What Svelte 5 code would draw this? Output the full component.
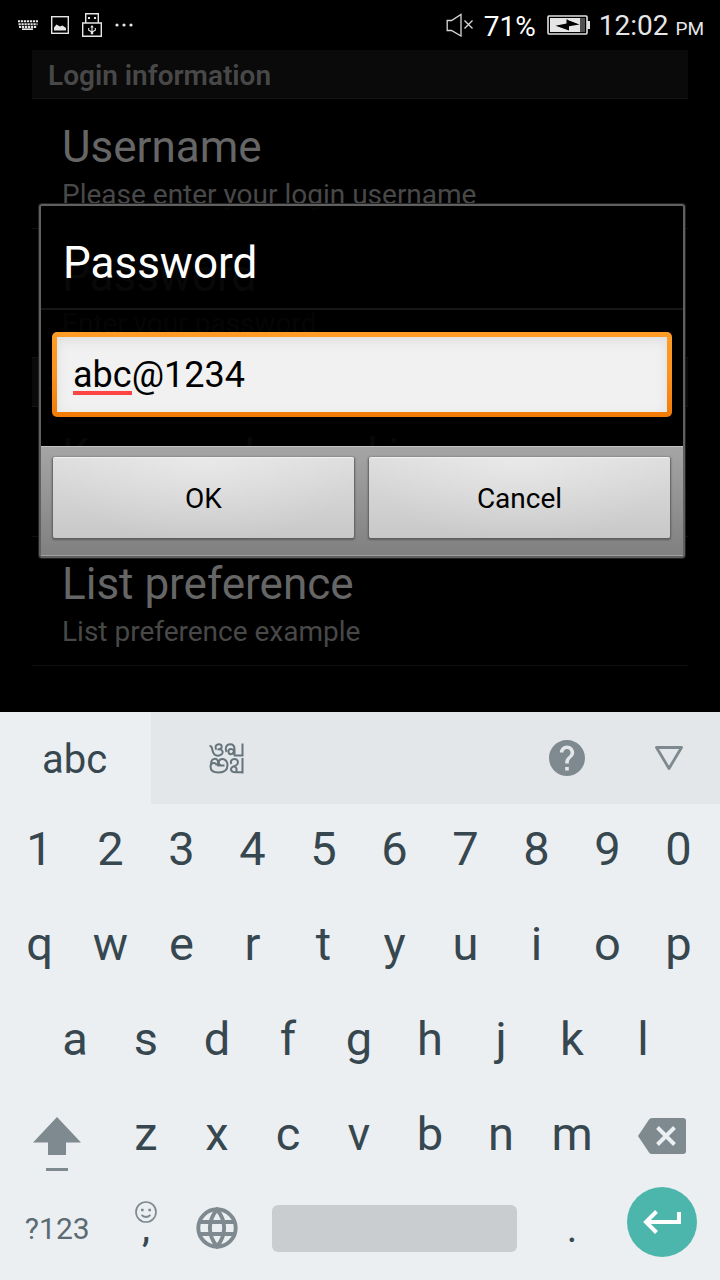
<script>
  const digits = [...'1234567890'];
  const upper = [...'qwertyuiop'];
  const home = [...'asdfghjkl'];
  const lower = [...'zxcvbnm'];
  let password = $state('abc@1234');
</script>

<div class="screen">
  <header class="status">
    <div class="notes">
      <svg width="20" height="10" viewBox="0 0 20 10" aria-hidden="true">
        <path d="M0 1.2H20M0.5 4.2H19.5M1 7H19" stroke="#e6e6e6" stroke-width="2" stroke-dasharray="2.2 .8" />
        <path d="M4 9.2H15" stroke="#e6e6e6" stroke-width="1.6" />
      </svg>
      <svg class="note" width="18" height="18" viewBox="0 0 18 18" aria-hidden="true">
        <rect x=".7" y=".7" width="16.6" height="16.6" fill="none" stroke="#e6e6e6" stroke-width="1.4" />
        <path d="M3 14.500V11.500L5.500 8.500L9 10.500L11.500 9.500L15 12V14.500Z" fill="#e6e6e6" />
      </svg>
      <svg class="note" width="20" height="24" viewBox="0 0 20 24" aria-hidden="true">
        <path d="M3.700 10V.7H16.300V10M.7 10H19.300V23.300H.7Z" fill="none" stroke="#e6e6e6" stroke-width="1.4" />
        <path d="M6 4h2v2H6zM12 4h2v2h-2zM10 12l1.800 2.500H8.200zM8.800 19h2.400v2.200H8.800z" fill="#e6e6e6" />
        <path d="M10 13V20M6.700 15V17.200L10 19L13.300 17.200V15" fill="none" stroke="#e6e6e6" stroke-width="1.100" />
      </svg>
      <svg class="note" width="18" height="4" viewBox="0 0 18 4" fill="#e6e6e6" aria-hidden="true">
        <circle cx="2" cy="2" r="1.600" /><circle cx="9" cy="2" r="1.600" /><circle cx="16" cy="2" r="1.600" />
      </svg>
    </div>
    <div class="system">
      <svg width="28" height="24" viewBox="0 0 28 24" fill="none" stroke="#d8d8d8" stroke-width="1.300" aria-hidden="true">
        <path d="M1.200 7.500H5.500L15 1.500V23L5.500 17.500H1.200Z" />
        <path d="M18.500 7.500L26.500 15.500M26.500 7.500L18.500 15.500" />
      </svg>
      <span class="level">71%</span>
      <svg class="battery" width="44" height="20" viewBox="0 0 44 20" aria-hidden="true">
        <rect x="1" y="1" width="39" height="18" rx="1" fill="none" stroke="#e0e0e0" stroke-width="1.600" />
        <path d="M40 6h3v8h-3z" fill="#e0e0e0" />
        <path d="M3 3h30v14H3z" fill="#e6e6e6" />
        <path d="M33 3h5v14h-5z" fill="#505050" />
        <path d="M8.500 10.800L19.500 8.500V4.300L32.500 9.500L22 11.200V15.500Z" fill="#000" />
        <path d="M21 3V5L33 9.300V3ZM9 11.500L20.500 15.500V17H9Z" fill="#e6e6e6" />
      </svg>
      <span class="clock">12:02 <small>PM</small></span>
    </div>
  </header>

  <main>
    <section class="prefs">
      <h2>Login information</h2>
      <div class="pref">
        <h3>Username</h3>
        <p>Please enter your login username</p>
      </div>
      <div class="pref">
        <h3>Password</h3>
        <p>Enter your password</p>
      </div>
      <h2>Settings</h2>
      <div class="pref">
        <h3>Keep me logged in</h3>
      </div>
      <div class="pref">
        <h3>List preference</h3>
        <p>List preference example</p>
      </div>
    </section>

    <div class="overlay">
      <form class="dialog" onsubmit={(e) => e.preventDefault()}>
        <label class="title" for="password">Password</label>
        <div class="content">
          <div class="field">
            <input id="password" type="text" spellcheck="false" autocomplete="off" bind:value={password} />
            <span class="typo"></span>
          </div>
        </div>
        <div class="actions">
          <button type="submit">OK</button>
          <button type="button">Cancel</button>
        </div>
      </form>
    </div>
  </main>

  <section class="keyboard">
    <div class="strip">
      <button class="tab active">abc</button>
      <button class="tab" aria-label="Native script">
        <svg width="35" height="31" viewBox="0 0 35 31" fill="none" stroke="#66747b" stroke-width="2" stroke-linejoin="round" aria-hidden="true">
          <path d="M.5 3C3.500 2.500 2.800 6 4 9C5 12 7.500 13 10 12.600C13.500 12 14.500 9 13 7.300C12 6.200 10.500 6.200 8.500 6.500M10.500 6.500C13.500 5.500 13.500 1.200 10 1.200C6.500 1.200 5.500 5 7.500 6.800" />
          <path d="M17.500 9C15.500 5 17.500 1.200 21 1.200C24.500 1.200 25.500 3.500 25.500 6V12.500H33.500M33.500 .5V13.500M25 8C23.500 5 19 5.500 19.500 9C20 12.500 24.500 11.500 25 8" />
          <path d="M7.500 22.500C7.500 19 1.500 19 1.500 23.500C1.500 28 5 29.500 9.500 29.500C15 29.500 18.500 27 18.500 22C18.500 17.500 15 15.500 12 16.200C9 17 9 21.500 12 22.500M2 21C2 14.500 9 14.500 9 19V22.500H15.500" />
          <path d="M22.500 21C21 18.500 22.500 16 25.500 16C28.500 16 29.500 18.500 28.500 21C27.500 23.500 22 23 22 26C22 29.300 25 29.300 27 29.300H33.500M33.500 15V30.500M25.500 23.500C28 24.500 28 27 27 29" />
        </svg>
      </button>
      <span class="space"></span>
      <button class="tool" aria-label="Help">
        <svg width="36" height="36" viewBox="2 2 20 20" fill="#7f8a90" aria-hidden="true">
          <path d="M12 2C6.480 2 2 6.480 2 12s4.480 10 10 10 10-4.480 10-10S17.520 2 12 2zm1 17h-2v-2h2v2zm2.070-7.750l-.9.920C13.450 12.900 13 13.500 13 15h-2v-.5c0-1.100.450-2.100 1.170-2.830l1.240-1.260c.370-.360.590-.860.590-1.410 0-1.100-.9-2-2-2s-2 .9-2 2H8c0-2.210 1.790-4 4-4s4 1.790 4 4c0 .880-.360 1.680-.930 2.250z" />
        </svg>
      </button>
      <button class="tool" aria-label="Hide keyboard">
        <svg width="28" height="24" viewBox="0 0 28 24" fill="none" stroke="#7f8a90" stroke-width="2.800" stroke-linejoin="round" aria-hidden="true">
          <path d="M1.500 1.500H26.500L14 22.500Z" />
        </svg>
      </button>
    </div>

    <div class="keys">
      <div class="row">
        {#each digits as key}<button class="key">{key}</button>{/each}
      </div>
      <div class="row">
        {#each upper as key}<button class="key">{key}</button>{/each}
      </div>
      <div class="row inset">
        {#each home as key}<button class="key">{key}</button>{/each}
      </div>
      <div class="row">
        <button class="key wide" aria-label="Shift">
          <svg width="48" height="76" viewBox="0 0 48 76" fill="#7f8a90" aria-hidden="true">
            <path d="M24 22L48 47.500H33V60H15V47.500H0ZM13 73h22v3H13z" />
          </svg>
        </button>
        {#each lower as key}<button class="key">{key}</button>{/each}
        <button class="key wide" aria-label="Backspace">
          <svg class="erase" width="48" height="36" viewBox="0 0 48 36" aria-hidden="true">
            <path d="M14 0H45Q48 0 48 3V33Q48 36 45 36H14Q12 36 11 34.500L0 18L11 1.500Q12 0 14 0Z" fill="#7f8a90" />
            <path d="M19.500 9.500L36.500 26.500M36.500 9.500L19.500 26.500" stroke="#ebeff2" stroke-width="3.900" />
          </svg>
        </button>
      </div>
      <div class="row">
        <button class="key wide symbols">?123</button>
        <button class="key comma">
          <svg width="22" height="22" viewBox="0 0 22 22" fill="none" stroke="#7f8a90" stroke-width="1.700" aria-hidden="true">
            <circle cx="11" cy="11" r="10" />
            <path d="M6.500 14Q11 18 15.500 14" />
            <path d="M6 9h2.600M13.400 9H16" stroke-width="2.600" />
          </svg>
          <span>,</span>
        </button>
        <button class="key" aria-label="Language">
          <svg width="42" height="42" viewBox="0 0 42 42" fill="none" stroke="#7f8a90" stroke-width="3.900" aria-hidden="true">
            <circle cx="21" cy="21" r="18.700" />
            <path d="M3.500 15H38.500M3.500 27H38.500M21 2.500C11.500 14 11.500 28 21 39.500C30.500 28 30.500 14 21 2.500Z" />
          </svg>
        </button>
        <button class="key bar" aria-label="Space"><span></span></button>
        <button class="key dot">.</button>
        <button class="key wide" aria-label="Enter">
          <span class="enter">
            <svg width="38" height="24" viewBox="0 0 38 24" fill="none" stroke="#fff" stroke-width="4" aria-hidden="true">
              <path d="M36 2V12H3M13.500 1.500L3 12L13.500 22.500" />
            </svg>
          </span>
        </button>
      </div>
    </div>
  </section>
</div>

<style>
  :global(body) { margin: 0; background: #000; }
  .screen {
    display: flex;
    flex-direction: column;
    min-height: 100vh;
    background: #000;
    font-family: Roboto, "Liberation Sans", sans-serif;
  }
  svg { display: block; flex: none; }
  button {
    margin: 0;
    padding: 0;
    border: 0;
    background: none;
    font-family: inherit;
    color: inherit;
  }

  .status {
    display: flex;
    justify-content: space-between;
    height: 50px;
    padding: 0 16px 0 18px;
    color: #e6e6e6;
  }
  .notes, .system { display: flex; align-items: center; }
  .note { margin-left: 13px; }
  .level, .clock { padding-top: 4px; font-size: 28px; line-height: 48px; }
  .level { margin-left: 10px; color: #fff; }
  .battery { margin: 0 8px 0 11px; }
  .clock small { font-size: 19px; }

  main { position: relative; flex: 1; }
  .prefs { padding: 0 32px; }
  h2, h3, p { margin: 0; }
  h2 {
    margin-bottom: 1px;
    padding: 4px 16px 0;
    border-bottom: 1px solid #141414;
    background: #0a0a0a;
    color: #484848;
    font-size: 28px;
    font-weight: 600;
    line-height: 44px;
  }
  .pref {
    box-sizing: border-box;
    min-height: 129px;
    padding: 21px 30px 17px;
    border-bottom: 1px solid #101010;
  }
  h3 {
    margin-bottom: 5px;
    color: #666;
    font-size: 44px;
    font-weight: 400;
    line-height: 52px;
  }
  .pref p {
    color: #484848;
    font-size: 28px;
    line-height: 33px;
  }

  .overlay {
    position: absolute;
    inset: 0;
    display: flex;
    align-items: center;
    padding: 0 35px 0 39px;
  }
  .dialog {
    flex: 1;
    border: 2px solid #606060;
    border-radius: 3px;
    background: rgba(0, 0, 0, 0.92);
    box-shadow: 0 0 0 1px #222;
  }
  .title {
    display: block;
    padding: 31px 22px 19px;
    border-bottom: 2px solid #161616;
    color: #fff;
    font-size: 44px;
    line-height: 52px;
  }
  .content { padding: 22px 11px 29px; }
  .field {
    position: relative;
    padding: 5px;
    border-radius: 5px;
    background: linear-gradient(#ff9c27, #fb921e 50%, #f37a07);
  }
  input {
    display: block;
    box-sizing: border-box;
    width: 100%;
    height: 75px;
    padding: 0 16px;
    border: 0;
    outline: 0;
    background: #f1f1f1;
    box-shadow: inset 0 4px 12px #dedede;
    color: #000;
    font: 36px Roboto, "Liberation Sans", sans-serif;
  }
  .typo {
    position: absolute;
    left: 21px;
    bottom: 22px;
    width: 59px;
    height: 4px;
    background: #ff4444;
  }
  .actions {
    display: flex;
    gap: 15px;
    padding: 10px 13px 17px 12px;
    border-top: 1px solid #c4c4c4;
    border-bottom: 1px solid #a0a0a0;
    background: linear-gradient(#a5a5a5, #808080);
  }
  .actions button {
    flex: 1;
    height: 81px;
    padding-top: 2px;
    border-radius: 2px;
    background: radial-gradient(ellipse at 50% 0, rgba(255, 255, 255, 0.35), transparent 75%), linear-gradient(#dedede, #c8c8c8);
    box-shadow: 0 1px 2px 1px #5c5c5c, inset 0 1px #f0f0f0;
    color: #000;
    font-size: 28px;
  }

  .keyboard { background: #ebeff2; color: #37474f; }
  .strip { display: flex; height: 92px; background: #e3e7ea; }
  .strip button { display: flex; align-items: center; justify-content: center; }
  .tab { width: 21%; }
  .tab.active { padding: 2px 2px 0 0; background: #ebeff2; font-size: 40px; }
  .space { flex: 1; }
  .tool { width: 102px; }
  .keys {
    display: flex;
    flex-direction: column;
    gap: 7px;
    padding: 0 6px 8px 4px;
  }
  .row {
    display: grid;
    grid-template-columns: repeat(20, 1fr);
    height: 88px;
  }
  .key {
    grid-column: span 2;
    display: flex;
    align-items: center;
    justify-content: center;
    font-size: 47px;
  }
  .inset .key:first-child { grid-column: 2 / span 2; }
  .wide { grid-column: span 3; }
  .erase { margin: 6px 0 0 2px; }
  .symbols { color: #5c6b72; font-size: 30px; }
  .comma { flex-direction: column; font-size: 36px; font-weight: 500; }
  .comma span { margin-top: -10px; padding-bottom: 10px; line-height: 32px; }
  .dot { font-size: 40px; }
  .bar { grid-column: span 8; }
  .bar span {
    width: 86%;
    height: 47px;
    border-radius: 6px;
    background: #c9cdd0;
  }
  .enter {
    display: flex;
    align-items: center;
    justify-content: center;
    width: 70px;
    height: 70px;
    margin: 0 0 12px 2px;
    border-radius: 50%;
    background: #4db6ac;
  }
</style>
